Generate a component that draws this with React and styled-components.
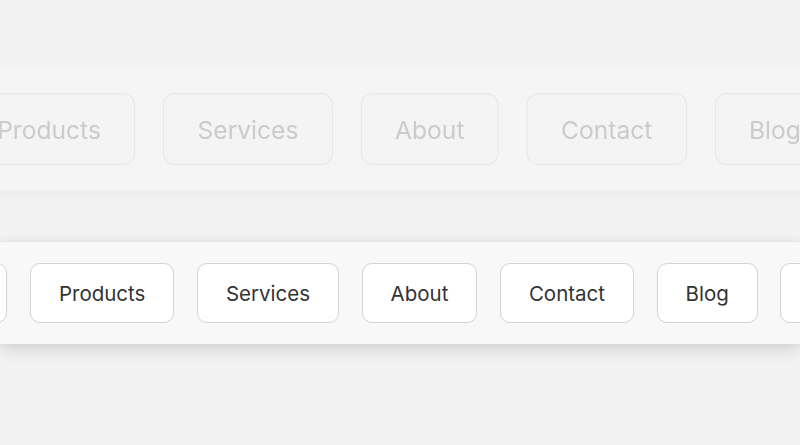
import React from "react";
import styled, { createGlobalStyle, css } from "styled-components";

const Global = createGlobalStyle`
  html, body {
    margin: 0;
    padding: 0;
    background: #f2f2f2;
    overflow: hidden;
  }
  body {
    font-family: Inter, "Noto Sans", "Liberation Sans", sans-serif;
  }
`;

const Stage = styled.div`
  width: 800px;
  height: 445px;
  display: flex;
  flex-direction: column;
  gap: 62px;
  padding-top: 78px;
  box-sizing: border-box;
  overflow: hidden;
`;

const Bar = styled.nav`
  width: 100%;
  padding: 21px 0;
  box-sizing: border-box;
  background: #f8f8f8;
  box-shadow: 0 6px 14px rgba(0, 0, 0, 0.13), 0 -2px 8px rgba(0, 0, 0, 0.04);
  ${(p) =>
    p.$ghost &&
    css`
      background: #f5f5f5;
      box-shadow: 0 5px 10px rgba(0, 0, 0, 0.025);
      transform: scale(1.2);
      transform-origin: 368px 50%;
      filter: blur(0.35px);
    `}
`;

const Row = styled.ul`
  list-style: none;
  margin: 0 0 0 -108px;
  padding: 0;
  display: flex;
  gap: 22.5px;
  white-space: nowrap;
`;

const Item = styled.li`
  flex: none;
`;

const NavButton = styled.button`
  height: 60px;
  padding: 0 28px;
  box-sizing: border-box;
  display: flex;
  align-items: center;
  justify-content: center;
  background: #ffffff;
  border: 1px solid #d3d3d3;
  border-radius: 10px;
  font-family: Inter, "Noto Sans", "Liberation Sans", sans-serif;
  font-size: 20.5px;
  font-weight: 400;
  color: #333333;
  cursor: pointer;
  ${(p) =>
    p.$ghost &&
    css`
      background: #f4f4f4;
      border-color: #e8e8e8;
      color: #cbcbcb;
    `}
`;

const links = ["Home", "Products", "Services", "About", "Contact", "Blog", "Careers"];

function NavBar({ ghost }) {
  return (
    <Bar $ghost={ghost} aria-hidden={ghost ? "true" : undefined}>
      <Row>
        {links.map((l) => (
          <Item key={l}>
            <NavButton $ghost={ghost}>{l}</NavButton>
          </Item>
        ))}
      </Row>
    </Bar>
  );
}

export default function App() {
  return (
    <>
      <Global />
      <Stage>
        <NavBar ghost />
        <NavBar />
      </Stage>
    </>
  );
}
